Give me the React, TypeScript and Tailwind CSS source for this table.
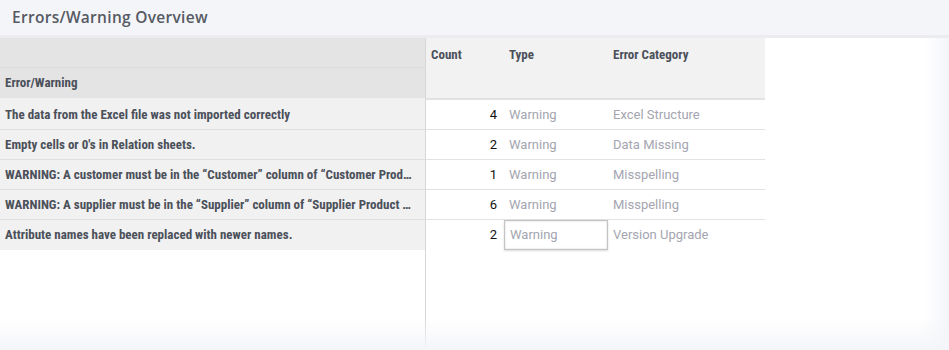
import React from "react";

const rows = [
  { msg: "The data from the Excel file was not imported correctly", count: 4, type: "Warning", cat: "Excel Structure" },
  { msg: "Empty cells or 0's in Relation sheets.", count: 2, type: "Warning", cat: "Data Missing" },
  { msg: "WARNING: A customer must be in the \u201cCustomer\u201d column of \u201cCustomer Prod\u2026", count: 1, type: "Warning", cat: "Misspelling" },
  { msg: "WARNING: A supplier must be in the \u201cSupplier\u201d column of \u201cSupplier Product \u2026", count: 6, type: "Warning", cat: "Misspelling" },
  { msg: "Attribute names have been replaced with newer names.", count: 2, type: "Warning", cat: "Version Upgrade", selected: true },
];

const narrow = "font-['Liberation_Sans_Narrow','Roboto_Condensed','Arial_Narrow',sans-serif] font-bold";

export default function App() {
  return (
    <div className="relative w-[949px] h-[350px] overflow-hidden bg-white">
      <div className="h-[35px] bg-[#f4f5f9] flex items-center pl-[12px]">
        <span className="font-['Open_Sans',sans-serif] text-[15.5px] font-semibold text-[#565a63] tracking-[0.3px]">
          Errors/Warning Overview
        </span>
      </div>
      <div className="h-[3px] bg-[#ececf0]" />
      <div className="flex h-[312px]">
        {/* frozen column */}
        <div className="w-[426px] border-r border-[#d6d6d6] flex flex-col">
          <div className="h-[62px] bg-[#e4e4e4] flex flex-col border-b-2 border-[#f0f0f0]">
            <div className="h-[30px] border-b border-[#dddddd]" />
            <div className={`flex-1 flex items-center pl-[5px] text-[13px] text-[#4b505a] ${narrow}`}>
              Error/Warning
            </div>
          </div>
          {rows.map((r, i) => (
            <div
              key={i}
              className={`h-[30px] bg-[#f1f1f1] flex items-center pl-[5px] text-[13px] text-[#4b505a] ${narrow} ${i < rows.length - 1 ? "border-b border-[#dfdfdf]" : ""}`}
            >
              {r.msg}
            </div>
          ))}
        </div>
        {/* scrollable part */}
        <div className="w-[339px] flex flex-col">
          <div className={`h-[62px] bg-[#f2f2f2] flex border-b-2 border-[#e2e2e2] text-[13px] text-[#4b505a] ${narrow}`}>
            <div className="w-[78px] pl-[5px] pt-[7px]">Count</div>
            <div className="w-[104px] pl-[5px] pt-[7px]">Type</div>
            <div className="flex-1 pl-[5px] pt-[7px]">Error Category</div>
          </div>
          {rows.map((r, i) => (
            <div
              key={i}
              className={`h-[30px] flex items-center font-['Roboto',sans-serif] text-[13px] ${i < rows.length - 1 ? "border-b border-[#e2e2e2]" : ""}`}
            >
              <div className="w-[78px] text-right pr-[7px] text-[#111]">{r.count}</div>
              <div
                className={`w-[104px] h-full flex items-center pl-[5px] text-[#a4a5b0] ${r.selected ? "border border-[#c4c4c4] shadow-[inset_0_0_2px_rgba(0,0,0,0.2),0_1px_2px_rgba(0,0,0,0.15)]" : ""}`}
              >
                {r.type}
              </div>
              <div className="flex-1 pl-[5px] text-[#a4a5b0]">{r.cat}</div>
            </div>
          ))}
        </div>
        <div className="flex-1" />
      </div>
      <div className="pointer-events-none absolute left-0 right-0 bottom-0 h-[32px] bg-gradient-to-b from-transparent to-[#f4f5f9]" />
      <div className="pointer-events-none absolute top-[38px] right-0 bottom-0 w-[26px] bg-gradient-to-r from-transparent to-[#f4f5f9]" />
    </div>
  );
}
